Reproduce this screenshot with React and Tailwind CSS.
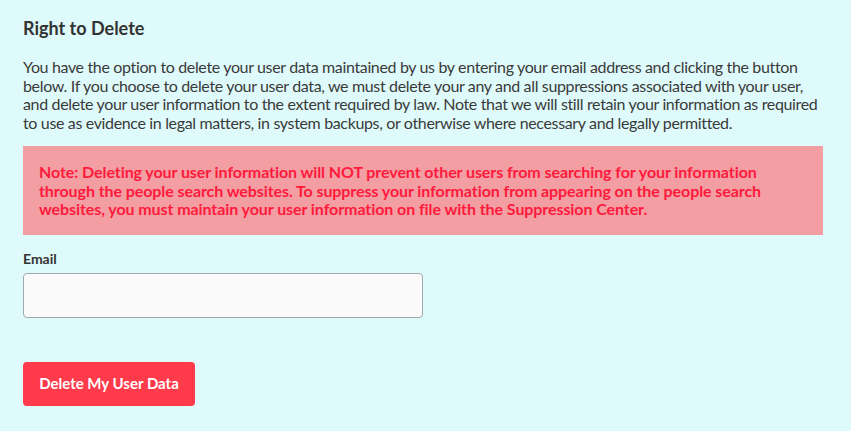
export default function App() {
  return (
    <div className="min-h-[431px] w-full bg-[#dffafa] px-[23px] pt-[17px] pb-6 font-['Lato',sans-serif] text-[#333]">
      <div className="w-[800px]">
        <h2 className="text-[18px] font-bold leading-[22px]">Right to Delete</h2>

        <p className="mt-[19px] whitespace-nowrap text-[16px] leading-[18.5px] tracking-[-0.35px] text-[#3a3a3a]">
          You have the option to delete your user data maintained by us by entering your email address and clicking the button
          <br />
          below. If you choose to delete your user data, we must delete your any and all suppressions associated with your user,
          <br />
          and delete your user information to the extent required by law. Note that we will still retain your information as required
          <br />
          to use as evidence in legal matters, in system backups, or otherwise where necessary and legally permitted.
        </p>

        {/* Warning */}
        <div className="mt-[14px] bg-[#f29ea3] px-4 pt-[17px] pb-[16px]">
          <p className="whitespace-nowrap text-[16px] font-bold leading-[18.5px] tracking-[-0.08px] text-[#ff1a3c]">
            Note: Deleting your user information will NOT prevent other users from searching for your information
            <br />
            through the people search websites. To suppress your information from appearing on the people search
            <br />
            websites, you must maintain your user information on file with the Suppression Center.
          </p>
        </div>

        <label className="mt-[15px] block text-[14px] font-bold leading-[17px] text-[#333]">Email</label>
        <input
          type="email"
          className="mt-[6px] block h-[45px] w-[400px] rounded-[4px] border border-[#a3a9aa] bg-[#fafafa] px-3 outline-none"
        />

        <button className="mt-[44px] h-[44px] w-[172px] rounded-[4px] bg-[#ff3a4a] text-[15px] font-bold text-white">
          Delete My User Data
        </button>
      </div>
    </div>
  )
}
